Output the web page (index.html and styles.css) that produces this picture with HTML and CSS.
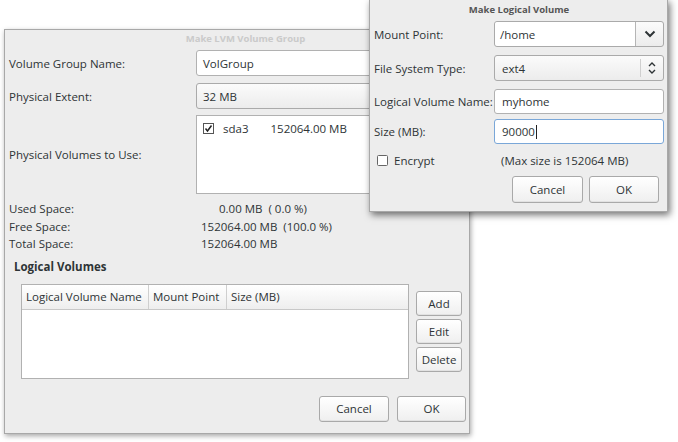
FILE: index.html
```html
<!DOCTYPE html>
<html>
<head>
<meta charset="utf-8">
<link rel="stylesheet" href="styles.css">
</head>
<body>
<div class="desktop">
  <div class="window main-win">
    <div class="title inactive">Make LVM Volume Group</div>
    <div class="form">
      <div class="lbl">Volume Group Name:</div>
      <div class="entry">VolGroup</div>
      <div class="lbl">Physical Extent:</div>
      <div class="combo"><span>32 MB</span></div>
      <div class="lbl pv">Physical Volumes to Use:</div>
      <div class="pvlist pv">
        <div class="pvrow">
          <svg class="chk" width="11" height="11" viewBox="0 0 11 11"><rect x="0.5" y="0.5" width="10" height="10" fill="#fff" stroke="#555"/><path d="M2.5 5.5 L4.5 8 L8.5 2.5" fill="none" stroke="#222" stroke-width="1.5"/></svg>
          <span class="pvname">sda3</span>
          <span class="pvsize">152064.00 MB</span>
        </div>
      </div>
    </div>
    <div class="space">
      <div>Used Space:</div><div class="used">0.00 MB &nbsp;( 0.0 %)</div>
      <div>Free Space:</div><div>152064.00 MB &nbsp;(100.0 %)</div>
      <div>Total Space:</div><div>152064.00 MB</div>
    </div>
    <div class="section">Logical Volumes</div>
    <div class="lvarea">
      <div class="table">
        <div class="thead">
          <div class="th c1">Logical Volume Name</div>
          <div class="th c2">Mount Point</div>
          <div class="th c3">Size (MB)</div>
        </div>
      </div>
      <div class="sidebtns">
        <div class="btn sbtn">Add</div>
        <div class="btn sbtn">Edit</div>
        <div class="btn sbtn">Delete</div>
      </div>
    </div>
    <div class="actions">
      <div class="btn abtn">Cancel</div>
      <div class="btn abtn">OK</div>
    </div>
  </div>

  <div class="window lv-win">
    <div class="title active">Make Logical Volume</div>
    <div class="lvrow lr1">
      <div class="lbl2">Mount Point:</div>
      <div class="combo2">
        <span class="ctext">/home</span>
        <span class="cbtn"><svg width="12" height="8" viewBox="0 0 12 8"><path d="M1.5 1.5 L6 6 L10.5 1.5" fill="none" stroke="#2e3436" stroke-width="2"/></svg></span>
      </div>
    </div>
    <div class="lvrow lr2">
      <div class="lbl2">File System Type:</div>
      <div class="combo3">
        <span class="ctext">ext4</span>
        <span class="cbtn2"><svg width="10" height="14" viewBox="0 0 10 14"><path d="M2 5 L5 2 L8 5 M2 9 L5 12 L8 9" fill="none" stroke="#2e3436" stroke-width="1.4"/></svg></span>
      </div>
    </div>
    <div class="lvrow lr3">
      <div class="lbl2">Logical Volume Name:</div>
      <div class="entry2">myhome</div>
    </div>
    <div class="lvrow lr4">
      <div class="lbl2">Size (MB):</div>
      <div class="entry2 focus">90000<span class="caret"></span></div>
    </div>
    <div class="lvrow lr5">
      <div class="lbl2 encrypt">
        <svg width="11" height="11" viewBox="0 0 11 11"><rect x="0.5" y="0.5" width="10" height="10" rx="1" fill="#fff" stroke="#666"/></svg>
        <span>Encrypt</span>
      </div>
      <div class="maxsize">(Max size is 152064 MB)</div>
    </div>
    <div class="actions2">
      <div class="btn bb1">Cancel</div>
      <div class="btn bb2">OK</div>
    </div>
  </div>
</div>
</body>
</html>
```
FILE: styles.css
```css
* { box-sizing: border-box; }
html, body { margin: 0; padding: 0; }
body {
  background: #ffffff;
  font-family: "Open Sans", "DejaVu Sans", sans-serif;
  font-size: 11.5px;
  color: #2e3436;
  width: 678px;
  height: 442px;
  overflow: hidden;
}
.desktop { position: relative; width: 678px; height: 442px; }

.window {
  position: absolute;
  background: #ededed;
  border: 1px solid #a8a8a8;
}
.main-win {
  left: 4px; top: 29px; width: 466px; height: 405px;
  box-shadow: 1px 2px 5px rgba(0,0,0,0.35);
  padding: 0 3px 0 4px;
  display: flex; flex-direction: column;
}
.lv-win {
  left: 369px; top: -1px; width: 299px; height: 213px;
  box-shadow: 2px 3px 7px rgba(0,0,0,0.55);
  padding: 0 3px 0 4px;
  display: flex; flex-direction: column;
}
.title {
  height: 20px;
  text-align: center;
  font-size: 9.5px;
  font-weight: bold;
  line-height: 18px;
}
.title.inactive { color: #cacaca; padding-left: 16px; }
.title.active { color: #555; height: 21px; line-height: 19px; }

.form {
  display: grid;
  grid-template-columns: 187px 1fr;
  grid-template-rows: 26px 26px 78px;
  row-gap: 7px;
  margin-right: 5px;
}
.form .pv { margin-top: -1px; }
.lbl { display: flex; align-items: center; white-space: nowrap; }
.entry, .combo, .entry2 {
  background: #fff;
  border: 1px solid #b1b1b1;
  border-radius: 3px;
  display: flex; align-items: center;
  padding-left: 6px;
}
.combo {
  background: linear-gradient(#fbfbfb, #ececec);
  border-color: #aaa;
  border-radius: 3px;
}
.pvlist {
  background: #fff;
  border: 1px solid #b1b1b1;
  padding: 5px 5px;
}
.pvrow { display: flex; align-items: center; height: 14px; }
.chk { margin-left: 1px; }
.pvname { margin-left: 9px; }
.pvsize { margin-left: 22px; }

.space {
  display: grid;
  grid-template-columns: 192px 1fr;
  line-height: 17.5px;
  margin-top: 6px;
}
.used { padding-left: 18px; }
.section {
  font-weight: bold;
  margin: 5px 0 0 5px;
  line-height: 18px;
}
.lvarea {
  display: flex;
  margin-top: 8px;
  margin-left: 12px;
  gap: 7px;
}
.table {
  width: 388px; height: 95px;
  background: #fff;
  border: 1px solid #b1b1b1;
}
.thead {
  display: flex;
  height: 25px;
  background: linear-gradient(#ffffff, #eeeeee);
  border-bottom: 1px solid #c8c8c8;
}
.th {
  display: flex; align-items: center;
  padding-left: 4px;
  border-right: 1px solid #cfcfcf;
  white-space: nowrap;
}
.c1 { width: 127px; }
.c2 { width: 78px; }
.c3 { flex: 1; border-right: none; }
.sidebtns {
  display: flex; flex-direction: column;
  gap: 3px;
  margin-top: 7px;
}
.btn {
  display: flex; align-items: center; justify-content: center;
  background: linear-gradient(#ffffff, #efefef);
  border: 1px solid #a9a9a9;
  border-radius: 3px;
  box-shadow: inset 0 -1px 0 #e2e2e2;
}
.sbtn { width: 46px; height: 25px; }
.actions {
  display: flex; justify-content: flex-end;
  gap: 8px;
  margin-top: 17px;
}
.abtn { width: 70px; height: 26px; }
.abtn:last-child { width: 69px; }

/* Make Logical Volume dialog */
.lvrow { display: flex; align-items: center; }
.lbl2 { width: 120px; flex: none; white-space: nowrap; display: flex; align-items: center; }
.lvrow > :last-child { width: 171px; }
.lr1 { height: 26px; }
.lr2 { height: 26px; margin-top: 8px; }
.lr3 { height: 25px; margin-top: 8px; }
.lr4 { height: 25px; margin-top: 5px; }
.lr5 { height: 18px; margin-top: 7px; }
.lvrow > .combo2, .lvrow > .combo3, .lvrow > .entry2 { height: 100%; }
.combo2, .combo3 {
  display: flex;
  border: 1px solid #aaa;
  border-radius: 3px;
  background: linear-gradient(#fbfbfb, #ececec);
}
.combo2 .ctext { flex: 1; background: #fff; display: flex; align-items: center; padding-left: 5px; border-right: 1px solid #b5b5b5; border-radius: 3px 0 0 3px; }
.cbtn { width: 27px; display: flex; align-items: center; justify-content: center; }
.combo3 .ctext { flex: 1; display: flex; align-items: center; padding-left: 7px; border-right: 1px solid #cfcfcf; margin: 3px 0; }
.cbtn2 { width: 22px; display: flex; align-items: center; justify-content: center; }
.entry2 { padding-left: 7px; }
.entry2.focus { border-color: #7aa7d8; }
.caret { display: inline-block; width: 1px; height: 14px; background: #222; margin-left: 1px; }
.encrypt { gap: 6px; padding-left: 3px; }
.maxsize { padding-left: 7px; display: flex; align-items: center; white-space: nowrap; }
.actions2 {
  display: flex; justify-content: flex-end;
  gap: 6px;
  padding-right: 5px;
  margin-top: 7px;
}
.bb1 { width: 71px; height: 27px; }
.bb2 { width: 70px; height: 27px; }
```
